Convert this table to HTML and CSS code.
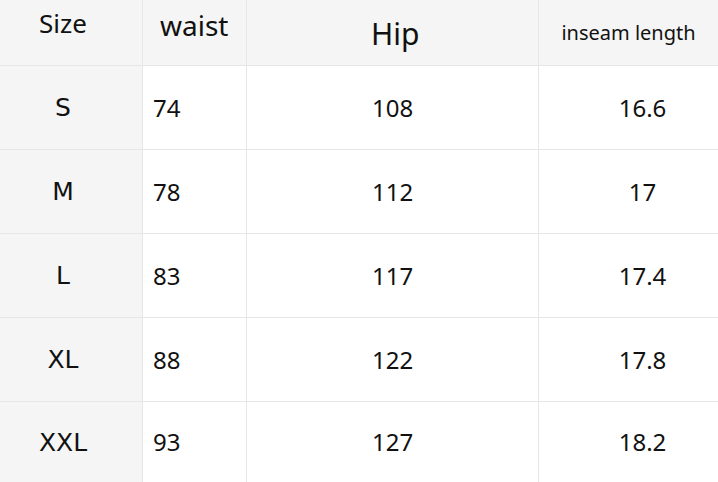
FILE: index.html
```html
<!DOCTYPE html>
<html>
<head>
<meta charset="utf-8">
<link rel="stylesheet" href="styles.css">
</head>
<body>
<div class="table">
  <div class="cell head c1"><span class="h-size">Size</span></div>
  <div class="cell head c2"><span class="h-waist">waist</span></div>
  <div class="cell head c3"><span class="h-hip">Hip</span></div>
  <div class="cell head c4"><span class="h-inseam">inseam length</span></div>

  <div class="cell size">S</div><div class="cell c2 val">74</div><div class="cell c3 val">108</div><div class="cell c4 val">16.6</div>
  <div class="cell size">M</div><div class="cell c2 val">78</div><div class="cell c3 val">112</div><div class="cell c4 val">17</div>
  <div class="cell size">L</div><div class="cell c2 val">83</div><div class="cell c3 val">117</div><div class="cell c4 val">17.4</div>
  <div class="cell size">XL</div><div class="cell c2 val">88</div><div class="cell c3 val">122</div><div class="cell c4 val">17.8</div>
  <div class="cell size last">XXL</div><div class="cell c2 val last">93</div><div class="cell c3 val last">127</div><div class="cell c4 val last">18.2</div>
</div>
</body>
</html>
```
FILE: styles.css
```css
html, body {
  margin: 0;
  padding: 0;
  background: #ffffff;
}
body {
  font-family: "Noto Sans", "Open Sans", sans-serif;
  color: #111;
  width: 718px;
  height: 482px;
  overflow: hidden;
}
.table {
  display: grid;
  grid-template-columns: 143px 104px 292px 179px;
  grid-template-rows: 66px 84px 84px 84px 84px 80px;
}
.cell {
  box-sizing: border-box;
  border-right: 1px solid #e6e6e6;
  border-bottom: 1px solid #e6e6e6;
  line-height: 1;
  background: #fff;
  display: flex;
}
.c4 { border-right: none; }
.last { border-bottom: none; }
.head {
  background: #f5f5f5;
  align-items: flex-start;
}
.c1 { justify-content: center; padding-right: 16px; }
.h-size { font-size: 26px; padding-top: 10px; }
.h-waist { font-size: 28px; padding-top: 11px; padding-left: 17px; }
.c3.head { padding-left: 124px; }
.h-hip { font-size: 30px; padding-top: 19px; }
.c4.head { justify-content: center; }
.h-inseam { font-size: 20px; padding-top: 23px; }

.size {
  background: #f5f5f5;
  font-family: "DejaVu Sans", "Noto Sans", sans-serif;
  font-size: 25px;
  align-items: center;
  justify-content: center;
  padding-right: 16px;
}
.val {
  font-size: 24px;
  align-items: center;
}
.c2.val { padding-left: 10px; }
.c3.val { padding-left: 125px; }
.c4.val { justify-content: center; padding-left: 28px; }
```
